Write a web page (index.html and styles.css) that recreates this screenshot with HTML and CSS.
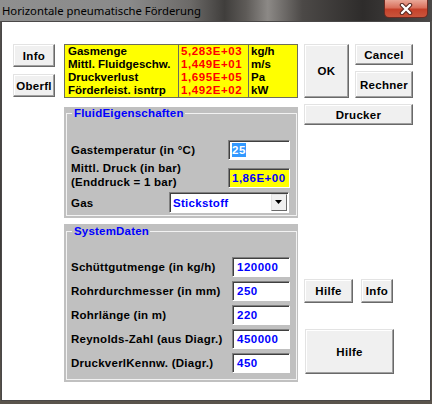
FILE: index.html
```html
<!DOCTYPE html>
<html lang="de">
<head>
  <meta charset="UTF-8" />
  <title>Horizontale pneumatische Förderung</title>
  <link rel="stylesheet" href="styles.css">
</head>
<body>
  <div class="window">
    <div class="titlebar">
      <span class="title">Horizontale pneumatische Förderung</span>
      <div class="close">
        <svg width="16" height="12" viewBox="0 0 16 12">
          <path d="M4 2 L12 10 M12 2 L4 10" stroke="#5a2a22" stroke-width="4.5" stroke-linecap="round" fill="none"/>
          <path d="M4 2 L12 10 M12 2 L4 10" stroke="#ffffff" stroke-width="2.4" stroke-linecap="round" fill="none"/>
        </svg>
      </div>
    </div>

    <div class="client">
      <div class="col-left">
        <button class="btn btn-info">Info</button>
        <button class="btn btn-oberfl">Oberfl</button>
      </div>

      <div class="col-mid">
        <div class="results">
          <div class="rcol labels">Gasmenge<br>Mittl. Fluidgeschw.<br>Druckverlust<br>Förderleist. isntrp</div>
          <div class="rcol werte">5,283E+03<br>1,449E+01<br>1,695E+05<br>1,492E+02</div>
          <div class="rcol einheiten">kg/h<br>m/s<br>Pa<br>kW</div>
        </div>

        <div class="panel panel-fluid">
          <fieldset>
            <legend>FluidEigenschaften</legend>
            <div class="row row-first">
              <span class="label">Gastemperatur (in °C)</span>
              <div class="field f-fluid"><span class="sel">25</span></div>
            </div>
            <div class="row row-druck">
              <span class="label">Mittl. Druck (in bar)<br>(Enddruck = 1 bar)</span>
              <div class="field f-fluid gelb">1,86E+00</div>
            </div>
            <div class="row row-gas">
              <span class="label">Gas</span>
              <div class="combo">
                <span class="combo-text">Stickstoff</span>
                <div class="arrow">
                  <svg width="8" height="5" viewBox="0 0 8 5"><path d="M0 0 H7 L3.5 4 Z" fill="#000"/></svg>
                </div>
              </div>
            </div>
          </fieldset>
        </div>

        <div class="panel panel-system">
          <fieldset>
            <legend>SystemDaten</legend>
            <div class="row row-first">
              <span class="label">Schüttgutmenge (in kg/h)</span>
              <div class="field f-sys">120000</div>
            </div>
            <div class="row">
              <span class="label">Rohrdurchmesser (in mm)</span>
              <div class="field f-sys">250</div>
            </div>
            <div class="row">
              <span class="label">Rohrlänge (in m)</span>
              <div class="field f-sys">220</div>
            </div>
            <div class="row">
              <span class="label">Reynolds-Zahl (aus Diagr.)</span>
              <div class="field f-sys">450000</div>
            </div>
            <div class="row">
              <span class="label">DruckverlKennw. (Diagr.)</span>
              <div class="field f-sys">450</div>
            </div>
          </fieldset>
        </div>
      </div>

      <div class="col-right">
        <div class="top-row">
          <button class="btn btn-ok">OK</button>
          <div class="stack">
            <button class="btn btn-cancel">Cancel</button>
            <button class="btn btn-rechner">Rechner</button>
          </div>
        </div>
        <button class="btn btn-drucker">Drucker</button>
        <div class="help-row">
          <button class="btn btn-hilfe">Hilfe</button>
          <button class="btn btn-info2">Info</button>
        </div>
        <button class="btn btn-hilfe-gross">Hilfe</button>
      </div>
    </div>
  </div>
</body>
</html>
```

FILE: styles.css
```css
body {
  margin: 0;
  font-family: "Liberation Sans", Arial, sans-serif;
  background: #3a3836;
}

.window {
  width: 432px;
  height: 404px;
  display: flex;
  flex-direction: column;
  background: linear-gradient(180deg, #55524f 0%, #3e3b39 60%, #5a544c 100%);
}

/* Titelleiste */
.titlebar {
  height: 21px;
  position: relative;
  background: linear-gradient(90deg, #8f8f8f 0%, #8a8a8a 30%, #6c6a68 44%, #403e3c 52%, #5e5b58 57%, #8c8986 62%, #4c4947 70%, #2e2c2b 84%, #4b4847 100%);
}

.title {
  position: absolute;
  left: 2px;
  top: 3px;
  font-family: "Noto Sans", "Open Sans", sans-serif;
  font-size: 11.3px;
  line-height: 16px;
  color: #000;
}

.close {
  position: absolute;
  left: 384px;
  top: 0;
  width: 44px;
  height: 18px;
  box-sizing: border-box;
  border: 1px solid #6b2a22;
  border-top: none;
  border-radius: 0 0 5px 5px;
  background: linear-gradient(180deg, #e9a898 0%, #d9705c 45%, #c5412a 55%, #c9553c 100%);
  display: flex;
  align-items: center;
  justify-content: center;
}

/* Client-Bereich */
.client {
  flex: 1;
  margin: 0 1px 3px 1px;
  background: #fff;
  border: 1px solid #4a4848;
  display: flex;
  align-items: flex-start;
  padding: 22px 0 0 11px;
  font-size: 11.5px;
  font-weight: bold;
}

.btn {
  font-family: "Liberation Sans", Arial, sans-serif;
  font-size: 11.5px;
  font-weight: bold;
  letter-spacing: 0.3px;
  color: #000;
  padding: 0;
  margin: 0;
  background: #f0f0f0;
  border: 1px solid;
  border-color: #e3e3e3 #696969 #696969 #e3e3e3;
  box-shadow: inset -1px -1px 0 #a0a0a0, inset 1px 1px 0 #ffffff;
  box-sizing: border-box;
  display: block;
}

.col-left {
  display: flex;
  flex-direction: column;
  gap: 7px;
  width: 42px;
}

.btn-info { width: 42px; height: 23px; }
.btn-oberfl { width: 42px; height: 23px; }

.col-mid {
  width: 234px;
  margin-left: 9px;
}

/* Ergebnistabelle */
.results {
  display: grid;
  grid-template-columns: 113px 70px 1fr;
  background: #ffff00;
  border: 1px solid #6e6e5a;
  height: 54px;
  box-sizing: border-box;
  line-height: 13px;
}

.rcol {
  padding-left: 3px;
  white-space: nowrap;
}

.werte {
  border-left: 1px solid #6e6e5a;
  color: #ff0000;
  padding-left: 2px;
  letter-spacing: 0.6px;
}

.einheiten {
  border-left: 1px solid #6e6e5a;
  padding-left: 2px;
}

/* Gruppenfelder */
.panel {
  background: #c0c0c0;
  box-sizing: border-box;
  padding: 0 1px 2px 2px;
}

.panel-fluid {
  margin-top: 9px;
  height: 111px;
}

.panel-system {
  margin-top: 6px;
  height: 158px;
  padding-top: 1px;
}

.panel fieldset {
  margin: 0;
  padding: 0 6px 0 4px;
  height: 100%;
  box-sizing: border-box;
  border: 1px solid #f2f2f2;
  min-width: 0;
}

.panel legend {
  color: #0000ff;
  line-height: 12px;
  padding: 0 1px 0 2px;
  margin-left: 1px;
  letter-spacing: 0.2px;
}

.row {
  display: flex;
  align-items: center;
  justify-content: space-between;
  margin-top: 4px;
}

.label {
  line-height: 14px;
  white-space: nowrap;
  letter-spacing: 0.25px;
}

.panel-fluid .row-first { margin-top: 21px; }
.panel-system .row-first { margin-top: 20px; }

.row-druck {
  margin-top: 1px;
  align-items: flex-end;
}

.row-druck .field { margin-bottom: 1px; }

.row-gas { margin-top: 3px; }

.field {
  background: #fff;
  border: 1px solid;
  border-color: #808080 #ffffff #ffffff #808080;
  box-shadow: inset 1px 1px 0 #404040;
  box-sizing: border-box;
  height: 20px;
  line-height: 18px;
  padding-left: 3px;
  color: #0000ff;
  letter-spacing: 0.5px;
}

.f-fluid { width: 62px; }
.f-sys { width: 58px; padding-left: 4px; }

.gelb { background: #ffff00; }

.sel {
  background: #3399ff;
  color: #fff;
  padding: 1px 0;
}

.combo {
  width: 120px;
  height: 21px;
  box-sizing: border-box;
  background: #fff;
  border: 1px solid;
  border-color: #808080 #ffffff #ffffff #808080;
  box-shadow: inset 1px 1px 0 #404040;
  display: flex;
  align-items: center;
  justify-content: space-between;
  padding: 1px 1px 1px 3px;
  margin-right: 1px;
  color: #0000ff;
  letter-spacing: 0.3px;
}

.arrow {
  width: 16px;
  height: 17px;
  box-sizing: border-box;
  background: #f0f0f0;
  border: 1px solid;
  border-color: #e3e3e3 #696969 #696969 #e3e3e3;
  display: flex;
  align-items: center;
  justify-content: center;
}

/* rechte Spalte */
.col-right {
  width: 109px;
  margin-left: 6px;
}

.top-row {
  display: flex;
  gap: 6px;
}

.btn-ok { width: 45px; height: 54px; }

.stack {
  display: flex;
  flex-direction: column;
  gap: 6px;
}

.btn-cancel { width: 58px; height: 21px; }
.btn-rechner { width: 58px; height: 27px; }

.btn-drucker {
  width: 109px;
  height: 21px;
  margin-top: 6px;
}

.help-row {
  display: flex;
  gap: 8px;
  margin-top: 154px;
}

.btn-hilfe { width: 49px; height: 24px; }
.btn-info2 { width: 32px; height: 24px; }

.btn-hilfe-gross {
  width: 89px;
  height: 45px;
  margin-top: 26px;
  margin-left: 1px;
}
```
